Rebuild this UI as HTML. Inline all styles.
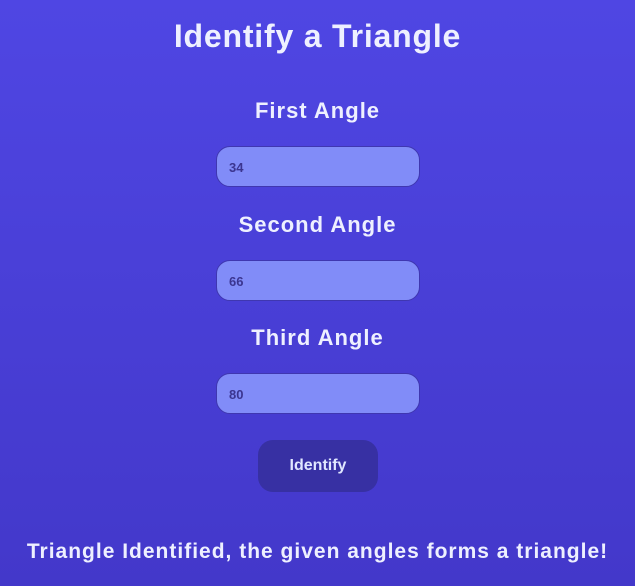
<!DOCTYPE html>
<html><head><style>
html,body{margin:0;padding:0}
body{width:635px;height:586px;overflow:hidden;background:linear-gradient(180deg,#4f46e3 0%,#4338ca 100%);font-family:"Liberation Sans",sans-serif;position:relative;color:#eef0ff}
.t{position:absolute;left:0;width:635px;text-align:center;font-weight:bold;white-space:nowrap}
.in{position:absolute;left:216px;width:202px;height:39px;background:#818cf8;border:1px solid #3f37b0;border-radius:14px;box-sizing:content-box}
.in span{position:absolute;left:12px;top:13px;font-size:13px;font-weight:bold;color:#3b3590}
.btn{position:absolute;left:258px;top:440px;width:120px;height:52px;background:#3730a3;border-radius:15px;color:#e0e7ff;font-weight:bold;font-size:16px;text-align:center;line-height:52px}
.l{font-size:22px;letter-spacing:1px}
</style></head><body>
<div class="t" style="top:18px;font-size:32px;letter-spacing:0.8px">Identify a Triangle</div>
<div class="t l" style="top:98px">First Angle</div>
<div class="in" style="top:146px"><span>34</span></div>
<div class="t l" style="top:212px">Second Angle</div>
<div class="in" style="top:260px"><span>66</span></div>
<div class="t l" style="top:325px">Third Angle</div>
<div class="in" style="top:373px"><span>80</span></div>
<div class="btn">Identify</div>
<div class="t" style="top:540px;font-size:21px;letter-spacing:1px">Triangle Identified, the given angles forms a triangle!</div>
</body></html>
